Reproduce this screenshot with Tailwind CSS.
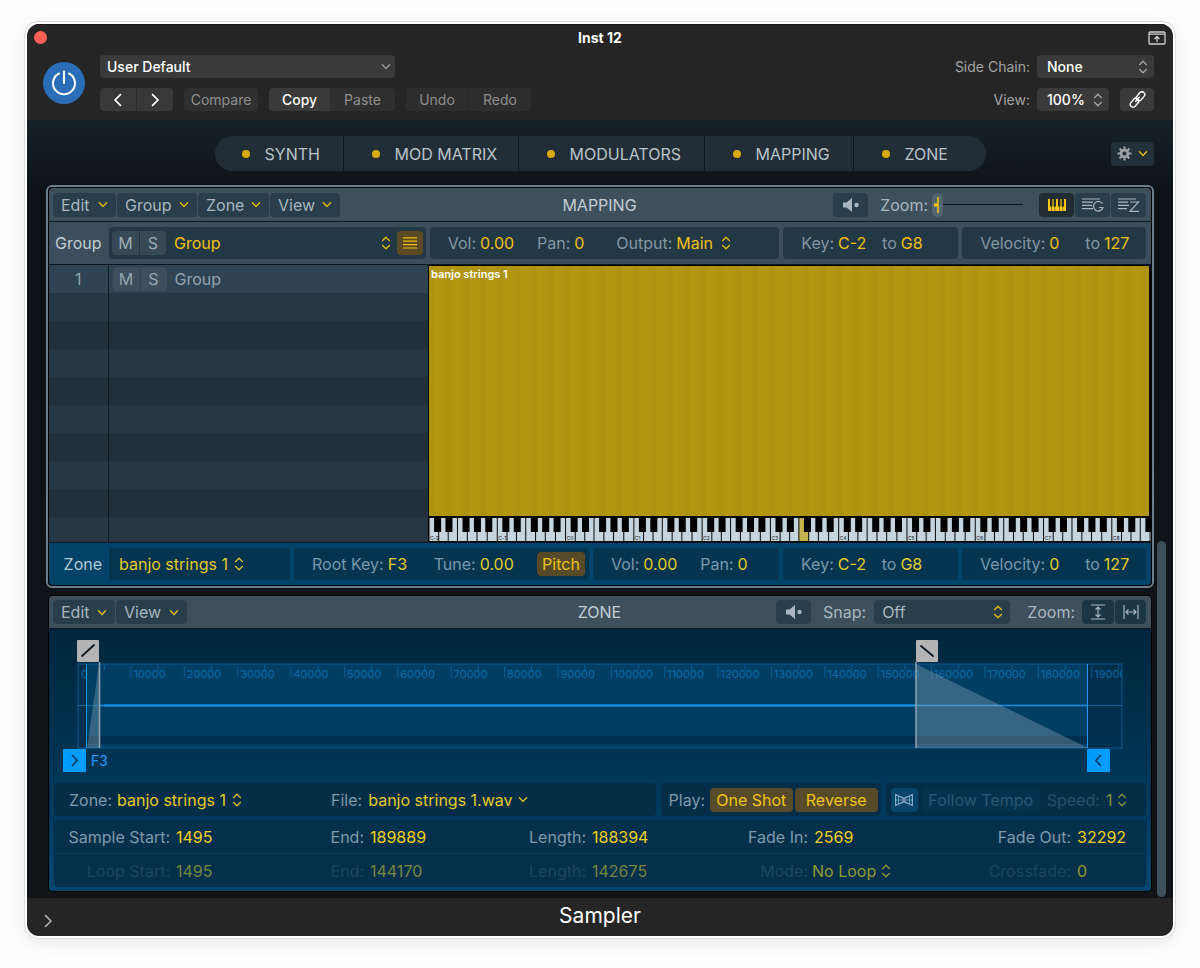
<!DOCTYPE html>
<html lang="en">
  <head>
    <meta charset="UTF-8" />
    <meta name="viewport" content="width=device-width, initial-scale=1.0" />
    <title>Inst 12 - Sampler</title>
    <script src="https://cdn.jsdelivr.net/npm/@tailwindcss/browser@4"></script>
  </head>
  <body class="bg-[#fdfdfd] px-[27px] py-6 font-['Inter',sans-serif] text-base leading-6">
    <!-- Shared icons -->
    <svg class="hidden">
      <symbol id="down" viewBox="0 0 10 7"><path d="M1 1.2 5 5.4 9 1.2" fill="none" stroke="currentColor" stroke-width="1.4" /></symbol>
      <symbol id="updown" viewBox="0 0 10 14"><path d="M1.2 5 5 1.2 8.8 5M1.2 9 5 12.8 8.8 9" fill="none" stroke="currentColor" stroke-width="1.3" /></symbol>
      <symbol id="right" viewBox="0 0 8 12"><path d="M1.5 1 6.5 6 1.5 11" fill="none" stroke="currentColor" stroke-width="1.5" /></symbol>
      <symbol id="speaker" viewBox="0 0 18 16"><path d="M1 5.5h3.5L10 1v14l-5.5-4.5H1z" fill="currentColor" /><circle cx="14.5" cy="8" r="2.2" fill="currentColor" /></symbol>
    </svg>

    <div class="overflow-hidden rounded-xl bg-[#252525] shadow-[0_0_0_2px_#ffffff,0_0_0_3px_#dadeda,0_4px_18px_rgba(0,0,0,0.12)]">
      <!-- Title bar -->
      <header class="border-t border-[#1a1a1a] pb-[9px]">
        <div class="flex h-[25px] items-center px-[7px]">
          <div class="flex-1"><button aria-label="Close" class="block size-[13px] rounded-full bg-[#ff5f57]"></button></div>
          <h1 class="text-sm font-bold text-white">Inst 12</h1>
          <div class="flex flex-1 justify-end">
            <button aria-label="Link window" class="text-[#d0d0d0]">
              <svg class="h-[14px] w-[18px]" viewBox="0 0 18 14" fill="none" stroke="currentColor"><rect x="1" y="1" width="16" height="12" rx="1" stroke-width="1.3" /><path d="M1 3.2h16" stroke-width="1.2" /><path d="M9 11V5.8M6.5 8 9 5.5 11.5 8" stroke-width="1.3" /></svg>
            </button>
          </div>
        </div>

        <div class="flex items-center px-4 pt-[5px] pr-[19px] text-sm leading-5">
          <button aria-label="Power" class="mr-[15px] flex size-[42px] items-center justify-center rounded-full bg-[#2a6db8] text-white">
            <svg class="size-7" viewBox="0 0 28 28" fill="none" stroke="currentColor" stroke-width="2" stroke-linecap="round"><path d="M14 2.5v11.500" /><path d="M9 4.500a11 11 0 1 0 10 0" /></svg>
          </button>

          <div class="grid gap-[10px]">
            <div class="flex h-[23px] w-[295px] items-center rounded bg-[#3a3a3a] pr-1 text-white">
              <select aria-label="Preset" class="flex-1 appearance-none pl-[7px] font-medium">
                <option>User Default</option>
              </select>
              <svg class="pointer-events-none h-[7px] w-[10px] text-[#9a9a9a]"><use href="#down" /></svg>
            </div>
            <div class="flex h-[23px] gap-[11px] text-[#8e8e8e]">
              <div class="flex w-[73px] overflow-hidden rounded bg-[#383838] text-white">
                <button aria-label="Previous" class="flex flex-1 items-center justify-center border-r border-[#282828]"><svg class="h-[14px] w-[10px] rotate-180"><use href="#right" /></svg></button>
                <button aria-label="Next" class="flex flex-1 items-center justify-center"><svg class="h-[14px] w-[10px]"><use href="#right" /></svg></button>
              </div>
              <button class="w-[74px] rounded bg-[#2f2f2f]">Compare</button>
              <div class="flex w-[126px] overflow-hidden rounded bg-[#2f2f2f]">
                <button class="w-[61px] bg-[#3a3a3a] font-medium text-white">Copy</button>
                <button class="flex-1">Paste</button>
              </div>
              <div class="flex w-[125px] overflow-hidden rounded bg-[#2d2d2d]">
                <button class="flex-1 border-r border-[#282828]">Undo</button>
                <button class="flex-1">Redo</button>
              </div>
            </div>
          </div>

          <div class="ml-auto grid grid-cols-[1fr_117px] items-center gap-x-[7px] gap-y-[10px] text-[#a4a4a4]">
            <label for="chain" class="text-right">Side Chain:</label>
            <div class="flex h-[23px] items-center rounded bg-[#3a3a3a] pr-[6px]">
              <select id="chain" class="flex-1 appearance-none pl-[10px] font-medium text-white"><option>None</option></select>
              <svg class="pointer-events-none h-[14px] w-[10px]"><use href="#updown" /></svg>
            </div>
            <label for="view" class="text-right">View:</label>
            <div class="flex justify-between">
              <div class="flex h-[23px] w-[72px] items-center rounded bg-[#3a3a3a] pr-[6px]">
                <select id="view" class="flex-1 appearance-none pl-[10px] font-medium text-white"><option>100%</option></select>
                <svg class="pointer-events-none h-[14px] w-[10px]"><use href="#updown" /></svg>
              </div>
              <button aria-label="Link" class="flex h-[23px] w-[34px] items-center justify-center rounded bg-[#3a3a3a] text-white">
                <svg class="size-[17px]" viewBox="0 0 17 17" fill="none" stroke="currentColor" stroke-width="1.4"><rect x="6.500" y="2.500" width="10" height="5.600" rx="2.800" transform="rotate(-50 11.500 5.300)" /><rect x=".5" y="8.900" width="10" height="5.600" rx="2.800" transform="rotate(-50 5.500 11.700)" /><path d="m6.600 10.500 3.800-4.200" stroke-linecap="round" /></svg>
              </button>
            </div>
          </div>
        </div>
      </header>

      <main class="bg-[linear-gradient(#16222a,#0d1318_70px,#101417)] pt-4">
        <!-- Tabs -->
        <nav class="flex items-center pr-[19px] text-[#b9c3ca]">
          <div class="flex-1"></div>
          <div class="flex h-[35px] overflow-hidden rounded-full bg-[#222e37]">
            <button class="flex w-32 items-center gap-[15px] pl-[27px]"><i class="size-2 rounded-full bg-[#d9ab0c]"></i>SYNTH</button>
            <button class="flex w-[175px] items-center gap-[15px] border-l border-[#0f171d] pl-7"><i class="size-2 rounded-full bg-[#d9ab0c]"></i>MOD MATRIX</button>
            <button class="flex w-[186px] items-center gap-[15px] border-l border-[#0f171d] pl-7"><i class="size-2 rounded-full bg-[#d9ab0c]"></i>MODULATORS</button>
            <button class="flex w-[149px] items-center gap-[15px] border-l border-[#0f171d] pl-7"><i class="size-2 rounded-full bg-[#d9ab0c]"></i>MAPPING</button>
            <button class="flex w-[133px] items-center gap-[15px] border-l border-[#0f171d] pl-7"><i class="size-2 rounded-full bg-[#d9ab0c]"></i>ZONE</button>
          </div>
          <div class="-ml-[19px] flex flex-1 justify-end">
            <button aria-label="Settings" class="flex h-6 w-[43px] items-center justify-center gap-[6px] rounded-sm bg-[#22303a]">
              <svg class="size-[15px] text-[#9aa0a4]" viewBox="0 0 16 16" fill="none" stroke="currentColor"><circle cx="8" cy="8" r="3.7" stroke-width="3" /><path d="M8 .5v3M8 12.500v3M.5 8h3M12.500 8h3M2.700 2.700l2.100 2.100M11.200 11.200l2.100 2.100M2.700 13.300l2.100-2.100M11.200 4.800l2.100-2.100" stroke-width="2.2" /></svg>
              <svg class="h-[7px] w-[10px] text-[#e6b90f]"><use href="#down" /></svg>
            </button>
          </div>
        </nav>

        <div class="mt-[14px] flex pl-[19px]">
          <div class="min-w-0 flex-1">
            <!-- Mapping -->
            <section class="rounded-md border-2 border-[#6b7e8d] bg-black p-px">
              <div class="flex h-[34px] items-center rounded-t border-b border-[#0c161c] bg-[#3f505d] pr-[5px] pl-1 text-[#a9b6bf]">
                <div class="flex flex-1 gap-px">
                  <button class="flex h-6 w-[63px] items-center justify-between rounded-sm bg-[#283e4b] px-2">Edit<svg class="h-[7px] w-[10px] text-[#e6b90f]"><use href="#down" /></svg></button>
                  <button class="flex h-6 w-20 items-center justify-between rounded-sm bg-[#283e4b] px-2">Group<svg class="h-[7px] w-[10px] text-[#e6b90f]"><use href="#down" /></svg></button>
                  <button class="flex h-6 w-[71px] items-center justify-between rounded-sm bg-[#283e4b] px-2">Zone<svg class="h-[7px] w-[10px] text-[#e6b90f]"><use href="#down" /></svg></button>
                  <button class="flex h-6 w-[70px] items-center justify-between rounded-sm bg-[#283e4b] px-2">View<svg class="h-[7px] w-[10px] text-[#e6b90f]"><use href="#down" /></svg></button>
                </div>
                <h2 class="text-[#c3cdd4]">MAPPING</h2>
                <div class="flex flex-1 items-center justify-end">
                  <button aria-label="Preview" class="mr-3 flex h-6 w-[35px] items-center justify-center rounded-sm bg-[#283e4b]"><svg class="h-4 w-[18px]"><use href="#speaker" /></svg></button>
                  <label for="zoom" class="mr-1">Zoom:</label>
                  <div class="relative mr-4 h-6 w-[91px]">
                    <input id="zoom" type="range" value="0" class="block h-6 w-full appearance-none bg-[linear-gradient(#0b1013,#0b1013)] bg-[length:82px_1px] bg-right bg-no-repeat [&::-webkit-slider-thumb]:h-6 [&::-webkit-slider-thumb]:w-[11px] [&::-webkit-slider-thumb]:appearance-none [&::-webkit-slider-thumb]:rounded-md [&::-webkit-slider-thumb]:bg-[#546671]" />
                    <svg class="pointer-events-none absolute top-0 left-0 h-6 w-[11px]" viewBox="0 0 11 24" stroke="#ffc800"><path d="M6 4v16" stroke-width="1.500" /><path d="M2 12h4" stroke-width="3" /></svg>
                  </div>
                  <div class="flex gap-px">
                    <button aria-label="Key mapping" class="flex h-6 w-[35px] items-center justify-center rounded-sm bg-[#222c33]">
                      <svg class="h-3 w-[18px]" viewBox="0 0 18 12"><path fill="#ffc800" d="M0 0h18v12H0z" /><path fill="#222c33" d="M2 0h2.400v7.500H2zM5.600 0H8v7.500H5.600zM10 0h2.400v7.500H10zM13.600 0H16v7.500h-2.400zM3 7h.5v5H3zM6.600 7h.5v5h-.5zM11 7h.5v5H11zM14.600 7h.5v5h-.5z" /></svg>
                    </button>
                    <button aria-label="Group view" class="flex h-6 w-[35px] items-center justify-center rounded-sm bg-[#283e4b]">
                      <svg class="h-4 w-[22px]" viewBox="0 0 22 16" fill="none" stroke="currentColor" stroke-width="1.200"><path d="M0 2h18M0 5.200h11M0 8.400h10M0 11.600h11M20.500 6.800A4.800 4.800 0 1 0 21 10.500h-4" /></svg>
                    </button>
                    <button aria-label="Zone view" class="flex h-6 w-[35px] items-center justify-center rounded-sm bg-[#283e4b]">
                      <svg class="h-4 w-[22px]" viewBox="0 0 22 16" fill="none" stroke="currentColor" stroke-width="1.200"><path d="M0 2h18M0 5.200h10M0 8.400h11M0 11.600h9M12 5h8.500L12 14.400h9" /></svg>
                    </button>
                  </div>
                </div>
              </div>

              <div class="grid h-[43px] grid-cols-[56px_317fr_350fr_175fr_184fr] items-center gap-x-1 border-b border-[#0c161c] bg-[#3c4e5b] pr-[5px] text-[#8396a2]">
                <div class="pl-[6px] text-[#c3cdd4]">Group</div>
                <div class="flex h-8 items-center rounded bg-[#233845] px-[3px]">
                  <button class="h-6 w-[27px] rounded-l-sm bg-[#374955] text-[#9dabb5]">M</button>
                  <button class="ml-px h-6 w-[26px] rounded-r-sm bg-[#374955] text-[#9dabb5]">S</button>
                  <select aria-label="Group" class="ml-2 flex-1 appearance-none text-[#efc012]"><option>Group</option></select>
                  <svg class="pointer-events-none mr-[6px] h-[14px] w-[10px] text-[#e6b90f]"><use href="#updown" /></svg>
                  <button aria-label="Group list" class="flex h-6 w-[26px] items-center justify-center rounded-sm bg-[#5b4a24]">
                    <svg class="h-3 w-[14px]" viewBox="0 0 14 12" stroke="#f0bf12" stroke-width="1.2"><path d="M0 .8h14M0 4.200h14M0 7.600h14M0 11h14" /></svg>
                  </button>
                </div>
                <div class="flex h-8 items-center rounded bg-[#233845] pl-[18px]">
                  <label for="gvol" class="mr-1">Vol:</label><input id="gvol" value="0.00" class="w-[57px] text-[#efc012]" />
                  <label for="gpan" class="mr-1">Pan:</label><input id="gpan" value="0" class="w-[42px] text-[#efc012]" />
                  <label for="gout" class="mr-1">Output:</label>
                  <select id="gout" class="appearance-none text-[#efc012]"><option>Main</option></select>
                  <svg class="pointer-events-none ml-2 h-[14px] w-[10px] text-[#e6b90f]"><use href="#updown" /></svg>
                </div>
                <div class="flex h-8 items-center rounded bg-[#233845] pl-[18px]">
                  <label for="gkey" class="mr-1">Key:</label><input id="gkey" value="C-2" class="w-11 text-[#efc012]" />
                  <label for="gkey2" class="mr-1">to</label><input id="gkey2" value="G8" class="w-8 text-[#efc012]" />
                </div>
                <div class="flex h-8 items-center rounded bg-[#233845] pl-[18px]">
                  <label for="gvel" class="mr-1">Velocity:</label><input id="gvel" value="0" class="w-9 text-[#efc012]" />
                  <label for="gvel2" class="mr-1">to</label><input id="gvel2" value="127" class="w-8 text-[#efc012]" />
                </div>
              </div>

              <div class="grid h-[277px] grid-cols-[379px_1fr] overflow-hidden">
                <div class="overflow-hidden bg-[#22303b]">
                  <table class="w-full table-fixed border-collapse text-[#93a3af]">
                    <tbody id="groups">
                      <tr class="h-7 bg-[#2f4353]">
                        <td class="w-[59px] border-r border-[#101a21] text-center">1</td>
                        <td class="pl-1">
                          <div class="flex h-7 items-center">
                            <button class="h-6 w-[27px] rounded-l-sm bg-[#3d4f5c]">M</button>
                            <button class="ml-px h-6 w-[26px] rounded-r-sm bg-[#3d4f5c]">S</button>
                            <span class="ml-2">Group</span>
                          </div>
                        </td>
                      </tr>
                    </tbody>
                  </table>
                </div>
                <div class="flex flex-col pt-px pl-px">
                  <div class="mr-[2px] flex-1 bg-[#b29610] bg-[repeating-linear-gradient(90deg,#ae9311_0_6px,#b29610_6px_12px,#b19510_12px_17px)] pl-[2px] text-[11px] leading-4 font-semibold text-white">banjo strings 1</div>
                  <svg id="keys" class="mt-px block w-full" viewBox="0 0 722 25"></svg>
                </div>
              </div>

              <div class="grid h-[43px] grid-cols-[56px_181fr_295fr_186fr_175fr_184fr] items-center gap-x-1 rounded-b border-t border-[#0c161c] bg-[#004268] pr-[5px] text-[#7699af]">
                <div class="pr-[3px] text-right text-[#b5cbd9]">Zone</div>
                <div class="flex h-8 items-center rounded bg-[#053450] pl-[10px]">
                  <select aria-label="Zone" class="appearance-none text-[#e4cb25]"><option>banjo strings 1</option></select>
                  <svg class="pointer-events-none ml-[6px] h-[14px] w-[10px] text-[#d8c02a]"><use href="#updown" /></svg>
                </div>
                <div class="flex h-8 items-center rounded bg-[#053450] pr-1 pl-[18px]">
                  <label for="root" class="mr-1">Root Key:</label><input id="root" value="F3" class="w-[46px] text-[#e4cb25]" />
                  <label for="tune" class="mr-1">Tune:</label><input id="tune" value="0.00" class="w-10 text-[#e4cb25]" />
                  <button class="ml-auto h-6 w-12 rounded-sm bg-[#564a28] text-[#f0c414]">Pitch</button>
                </div>
                <div class="flex h-8 items-center rounded bg-[#053450] pl-[18px]">
                  <label for="zvol" class="mr-1">Vol:</label><input id="zvol" value="0.00" class="w-[57px] text-[#e4cb25]" />
                  <label for="zpan" class="mr-1">Pan:</label><input id="zpan" value="0" class="w-8 text-[#e4cb25]" />
                </div>
                <div class="flex h-8 items-center rounded bg-[#053450] pl-[18px]">
                  <label for="zkey" class="mr-1">Key:</label><input id="zkey" value="C-2" class="w-11 text-[#e4cb25]" />
                  <label for="zkey2" class="mr-1">to</label><input id="zkey2" value="G8" class="w-8 text-[#e4cb25]" />
                </div>
                <div class="flex h-8 items-center rounded bg-[#053450] pl-[18px]">
                  <label for="zvel" class="mr-1">Velocity:</label><input id="zvel" value="0" class="w-9 text-[#e4cb25]" />
                  <label for="zvel2" class="mr-1">to</label><input id="zvel2" value="127" class="w-8 text-[#e4cb25]" />
                </div>
              </div>
            </section>

            <!-- Zone -->
            <section class="mx-[3px] mt-2 mb-[7px] overflow-hidden rounded bg-[linear-gradient(#00263c_33px,#003555_60%,#00466f)] shadow-[0_0_0_1px_#000000]">
              <div class="flex h-[33px] items-center border-b border-[#081a26] bg-[#3f505d] pr-[5px] pl-1 text-[#a9b6bf]">
                <div class="flex flex-1 gap-px">
                  <button class="flex h-6 w-[62px] items-center justify-between rounded-sm bg-[#283e4b] px-2">Edit<svg class="h-[7px] w-[10px] text-[#e6b90f]"><use href="#down" /></svg></button>
                  <button class="flex h-6 w-[71px] items-center justify-between rounded-sm bg-[#283e4b] px-2">View<svg class="h-[7px] w-[10px] text-[#e6b90f]"><use href="#down" /></svg></button>
                </div>
                <h2 class="text-[#c3cdd4]">ZONE</h2>
                <div class="flex flex-1 items-center justify-end">
                  <button aria-label="Preview" class="mr-3 flex h-6 w-[35px] items-center justify-center rounded-sm bg-[#283e4b]"><svg class="h-4 w-[18px]"><use href="#speaker" /></svg></button>
                  <label for="snap" class="mr-2">Snap:</label>
                  <div class="mr-[17px] flex h-6 w-[136px] items-center rounded-sm bg-[#283e4b] pr-[7px]">
                    <select id="snap" class="flex-1 appearance-none pl-2"><option>Off</option></select>
                    <svg class="pointer-events-none h-[14px] w-[10px] text-[#e6b90f]"><use href="#updown" /></svg>
                  </div>
                  <span class="mr-[7px]">Zoom:</span>
                  <div class="flex gap-px">
                    <button aria-label="Vertical zoom" class="flex h-6 w-8 items-center justify-center rounded-sm bg-[#1d3645]">
                      <svg class="size-4" viewBox="0 0 16 16" fill="none" stroke="currentColor" stroke-width="1.2"><path d="M1 1h14M1 15h14M8 3v10M5.500 5.500 8 3l2.500 2.500M5.500 10.500 8 13l2.500-2.500" /></svg>
                    </button>
                    <button aria-label="Horizontal zoom" class="flex h-6 w-[31px] items-center justify-center rounded-sm bg-[#1d3645]">
                      <svg class="size-4" viewBox="0 0 16 16" fill="none" stroke="currentColor" stroke-width="1.2"><path d="M1 1v14M15 1v14M3 8h10M5.500 5.500 3 8l2.500 2.500M10.500 5.500 13 8l-2.500 2.500" /></svg>
                    </button>
                  </div>
                </div>
              </div>

              <!-- Waveform -->
              <svg class="block w-full font-['Inter',sans-serif]" viewBox="0 0 1102 154">
                <clipPath id="frame"><rect x="29" y="35" width="1044" height="84" /></clipPath>
                <rect x="29" y="35" width="1044" height="84" fill="#002f4c" />
                <rect x="37" y="35" width="1002" height="84" fill="#003e63" />
                <g id="ruler" fill="#0c6ba6" font-size="11" clip-path="url(#frame)"></g>
                <rect x="31" y="107" width="1039" height="8" rx="2" fill="#00304f" />
                <rect x="29" y="35" width="1044" height="84" fill="none" stroke="#075b93" />
                <path d="M29 76.500h1044" stroke="#0c66a8" />
                <path d="M50 76.500h989" stroke="#1a8fe0" stroke-width="1.500" />
                <path d="M55 76.500h812" stroke="#1b93e8" stroke-width="2" />
                <path d="M37.500 35v84M1038.500 35v84" stroke="#1e9bff" />
                <path d="M50 35v84H38zM867 35v84h172z" fill="#c4cfd6" fill-opacity=".27" />
                <path d="M50.500 33v86M867 33v86" stroke="#93a4af" stroke-width="1.500" />
                <rect x="28" y="11" width="22" height="22" rx="1" fill="#b4b4b4" />
                <path d="m33 27 12-11" stroke="#0a1620" stroke-width="1.800" stroke-linecap="round" />
                <rect x="867" y="11" width="22" height="22" rx="1" fill="#b4b4b4" />
                <path d="m872 17 12 10" stroke="#0a1620" stroke-width="1.800" stroke-linecap="round" />
                <rect x="14" y="120" width="23" height="23" rx="1" fill="#009dff" />
                <path d="m23 126 5 5.500-5 5.500" fill="none" stroke="#033d63" stroke-width="1.800" />
                <rect x="1038" y="120" width="23" height="23" rx="1" fill="#009dff" />
                <path d="m1052 126-5 5.500 5 5.500" fill="none" stroke="#033d63" stroke-width="1.800" />
                <text x="42" y="137" font-size="14" fill="#1e9bff">F3</text>
              </svg>

              <div class="px-[5px] pb-1 text-[#7e9aac]">
                <div class="grid grid-cols-[601fr_220fr_260fr] gap-x-[5px]">
                  <div class="flex h-[33px] items-center rounded bg-[#042e48] pl-[15px]">
                    <label for="zone" class="mr-[5px]">Zone:</label>
                    <select id="zone" class="appearance-none text-[#e4cb25]"><option>banjo strings 1</option></select>
                    <svg class="pointer-events-none mr-[89px] ml-[6px] h-[14px] w-[10px] text-[#d8c02a]"><use href="#updown" /></svg>
                    <label for="file" class="mr-[6px]">File:</label>
                    <select id="file" class="appearance-none text-[#e4cb25]"><option>banjo strings 1.wav</option></select>
                    <svg class="pointer-events-none ml-[5px] h-[7px] w-[10px] text-[#d8c02a]"><use href="#down" /></svg>
                  </div>
                  <div class="flex h-[33px] items-center rounded bg-[#042e48] pr-[3px] pl-2">
                    <span class="mr-auto">Play:</span>
                    <button class="h-6 w-[83px] rounded-sm bg-[#564a28] text-[#f0c414]">One Shot</button>
                    <button class="ml-[2px] h-6 w-[83px] rounded-sm bg-[#564a28] text-[#f0c414]">Reverse</button>
                  </div>
                  <div class="flex h-[33px] items-center rounded bg-[#042e48] pl-[5px] text-[#254f6a]">
                    <button aria-label="Flex" class="flex h-6 w-[27px] items-center justify-center rounded-sm bg-[#06456c]">
                      <svg class="h-3 w-[18px]" viewBox="0 0 18 12" fill="none" stroke="#88abc2"><path d="M.6.6 9 4.300 17.400.6v10.800L9 7.700.6 11.400z" stroke-width="1.200" /><path d="M3.500 2v8M14.500 2v8M1 6h16M6 3l6 6M6 9l6-6" stroke-width=".8" /></svg>
                    </button>
                    <button class="ml-1 h-6 w-[118px] rounded-sm bg-[#04324e] whitespace-nowrap text-[#2c5874]">Follow Tempo</button>
                    <label for="speed" class="ml-[7px]">Speed:</label>
                    <select id="speed" class="ml-[6px] appearance-none text-[#829138]"><option>1</option></select>
                    <svg class="pointer-events-none ml-1 h-[14px] w-[10px] text-[#829138]"><use href="#updown" /></svg>
                  </div>
                </div>

                <div class="mt-1 rounded bg-[#05304b]">
                  <div class="grid h-[33px] grid-cols-[262fr_199fr_220fr_240fr_171fr] items-center">
                    <div class="flex gap-[6px]"><label for="start" class="w-[116px] text-right">Sample Start:</label><input id="start" value="1495" class="w-16 text-[#efd01c]" /></div>
                    <div class="flex gap-[6px]"><label for="end" class="w-12 text-right">End:</label><input id="end" value="189889" class="w-16 text-[#efd01c]" /></div>
                    <div class="flex gap-[6px]"><label for="len" class="w-[71px] text-right">Length:</label><input id="len" value="188394" class="w-16 text-[#efd01c]" /></div>
                    <div class="flex gap-[6px]"><label for="fin" class="w-[73px] text-right">Fade In:</label><input id="fin" value="2569" class="w-16 text-[#efd01c]" /></div>
                    <div class="flex gap-[6px]"><label for="fout" class="w-[96px] text-right">Fade Out:</label><input id="fout" value="32292" class="w-16 text-[#efd01c]" /></div>
                  </div>
                  <div class="grid h-[34px] grid-cols-[262fr_199fr_220fr_240fr_171fr] items-center border-t border-[#053e61] text-[#1d4660]">
                    <div class="flex gap-[6px]"><label for="lstart" class="w-[116px] text-right">Loop Start:</label><input id="lstart" value="1495" class="w-16 text-[#76873c]" /></div>
                    <div class="flex gap-[6px]"><label for="lend" class="w-12 text-right">End:</label><input id="lend" value="144170" class="w-16 text-[#76873c]" /></div>
                    <div class="flex gap-[6px]"><label for="llen" class="w-[71px] text-right">Length:</label><input id="llen" value="142675" class="w-16 text-[#76873c]" /></div>
                    <div class="flex items-center gap-1"><label for="mode" class="w-[73px] text-right">Mode:</label><select id="mode" class="appearance-none text-[#8f9c30]"><option>No Loop</option></select><svg class="pointer-events-none h-[14px] w-[10px] text-[#8f9c30]"><use href="#updown" /></svg></div>
                    <div class="flex gap-[6px]"><label for="xfade" class="w-[96px] text-right">Crossfade:</label><input id="xfade" value="0" class="w-16 text-[#8f9c30]" /></div>
                  </div>
                </div>
              </div>
            </section>
          </div>

          <!-- Scrollbar -->
          <div class="flex w-[19px] items-end pb-px pl-[3px]">
            <div class="h-1/2 w-[9px] rounded-full bg-[#3e4f5c]"></div>
          </div>
        </div>
      </main>

      <footer class="relative flex h-[38px] items-center justify-center pb-[3px] text-[21px] leading-7 text-white">
        Sampler
        <button aria-label="Show details" class="absolute bottom-2 left-4 text-[#a8a8a8]"><svg class="h-[14px] w-[10px]"><use href="#right" /></svg></button>
      </footer>
    </div>

    <script>
      // empty rows of the group list
      const groups = document.getElementById("groups");
      for (let i = 0; i < 9; i++) {
        const tr = document.createElement("tr");
        tr.className = i % 2 ? "h-7 bg-[#22303b]" : "h-7 bg-[#263744]";
        tr.innerHTML = '<td class="border-r border-[#101a21]"></td><td></td>';
        groups.appendChild(tr);
      }

      // piano keyboard, C-2 to G8
      const semi = 5.69;
      const whites = [0, 9.7, 19.2, 28.45, 38.3, 48, 58.2];
      const ends = [9.7, 19.2, 28.45, 38.3, 48, 58.2, 68.28];
      const blacks = [1, 3, 6, 8, 10];
      let keys = '<rect width="722" height="25" fill="#05080a" />';
      for (let oct = 0; oct < 11; oct++) {
        const x0 = oct * semi * 12;
        whites.forEach((w, i) => {
          const fill = oct === 5 && i === 3 ? "#c4b04c" : "#c6d4dd";
          keys += `<rect x="${x0 + w + 0.5}" y="1" width="${ends[i] - w - 1}" height="23" fill="${fill}" />`;
        });
        blacks.forEach(b => {
          keys += `<rect x="${x0 + b * semi - 0.6}" y="0" width="7" height="15" fill="#000" />`;
        });
        keys += `<text x="${x0 + 1}" y="23" font-size="5" fill="#222">C${oct - 2}</text>`;
      }
      document.getElementById("keys").innerHTML = keys;

      // sample ruler
      let ruler = '<text x="32" y="49">0</text>';
      for (let i = 0; i < 20; i++) {
        const x = 28 + i * 53.38;
        if (i > 0) {
          ruler += `<rect x="${x}" y="37" width="1" height="12" opacity=".7" />`;
          ruler += `<text x="${x + 3}" y="49">${i * 10000}</text>`;
        }
        ruler += `<rect x="${x + 27}" y="36" width="1" height="5" opacity=".7" />`;
      }
      document.getElementById("ruler").innerHTML = ruler;
    </script>
  </body>
</html>
